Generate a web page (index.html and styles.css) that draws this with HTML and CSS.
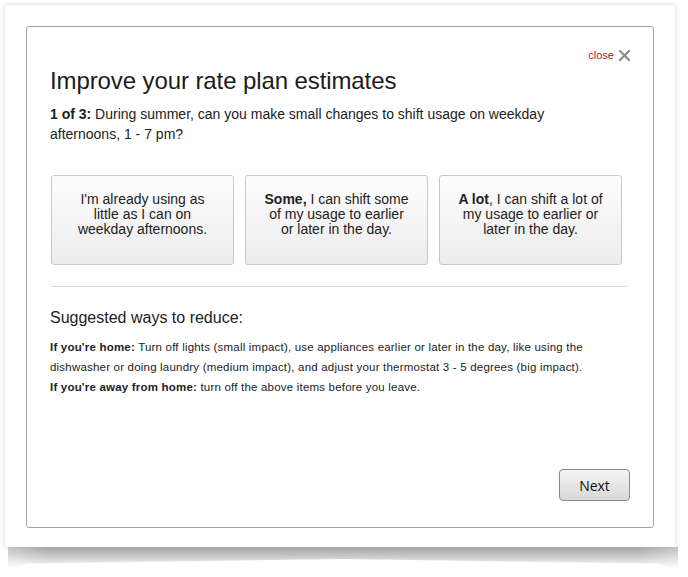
FILE: index.html
```html
<!DOCTYPE html>
<html>
<head>
<meta charset="utf-8">
<link rel="stylesheet" href="styles.css">
</head>
<body>
<div class="paper">
  <div class="dialog">
    <div class="close-row">
      <span class="close-link">close</span>
      <svg class="close-x" width="11" height="11" viewBox="0 0 11 11"><path d="M1 1L10 10M10 1L1 10" stroke="#888" stroke-width="2" stroke-linecap="square"/></svg>
    </div>
    <h1 class="title">Improve your rate plan estimates</h1>
    <p class="question"><b>1 of 3:</b> During summer, can you make small changes to shift usage on weekday afternoons, 1 - 7 pm?</p>
    <div class="choices">
      <div class="choice">I'm already using as little as I can on weekday afternoons.</div>
      <div class="choice"><b>Some,</b> I can shift some of my usage to earlier or later in the day.</div>
      <div class="choice"><b>A lot</b>, I can shift a lot of my usage to earlier or later in the day.</div>
    </div>
    <div class="divider"></div>
    <h2 class="sub">Suggested ways to reduce:</h2>
    <p class="tips"><b>If you're home:</b> Turn off lights (small impact), use appliances earlier or later in the day, like using the dishwasher or doing laundry (medium impact), and adjust your thermostat 3 - 5 degrees (big impact).<br><b>If you're away from home:</b> turn off the above items before you leave.</p>
    <div class="footer">
      <button class="next">Next</button>
    </div>
  </div>
</div>
<div class="curl"></div>
</body>
</html>
```
FILE: styles.css
```css
html, body {
  margin: 0;
  padding: 0;
  background: #fff;
}
body {
  font-family: "Liberation Sans", Arial, sans-serif;
  color: #222;
}
.paper {
  margin: 5px 0 0 5px;
  width: 670px;
  height: 542px;
  padding: 21px 0 0 21px;
  box-sizing: border-box;
  background: #fff;
  box-shadow: 0 0 5px rgba(0,0,0,0.18);
}
.curl {
  margin-left: 8px;
  width: 670px;
  height: 22px;
  background:
    linear-gradient(to right, rgba(255,255,255,0.35), rgba(255,255,255,0) 6%, rgba(255,255,255,0) 94%, rgba(255,255,255,0.35)),
    linear-gradient(to bottom, #a4a4a4, #c2c2c2 35%, #e6e6e6 70%, #ffffff);
  clip-path: polygon(0 0, 100% 0, 100% 100%, 97% 75%, 50% 55%, 3% 75%, 0 100%);
}
.dialog {
  width: 628px;
  height: 502px;
  box-sizing: border-box;
  border: 1px solid #a3a3a3;
  border-radius: 3px;
  padding: 20px 23px 0 23px;
  display: flex;
  flex-direction: column;
}
.close-row {
  display: flex;
  justify-content: flex-end;
  align-items: center;
  gap: 5px;
  height: 14px;
  margin-top: 1px;
}
.close-link {
  color: #b5173f;
  font-size: 11px;
}
.close-x {
  display: block;
}
.title {
  margin: 1px 0 0;
  font-size: 24px;
  font-weight: normal;
  line-height: 36px;
  color: #1c1c1c;
  letter-spacing: -0.1px;
}
.question {
  margin: 5px 0 0;
  font-size: 14px;
  line-height: 20px;
  width: 520px;
}
.choices {
  display: grid;
  grid-template-columns: repeat(3, 183px);
  column-gap: 11px;
  margin: 31px 0 0 1px;
}
.choice {
  height: 90px;
  box-sizing: border-box;
  border: 1px solid #c9c9c9;
  border-radius: 3px;
  background: linear-gradient(to bottom, #fdfdfd, #ececec);
  text-align: center;
  font-size: 14px;
  line-height: 15px;
  padding: 16px 16px 0;
}
.divider {
  margin-top: 20px;
  width: 578px;
  height: 1px;
  border-bottom: 1px solid #d4d4d4;
  border-radius: 0 0 3px 3px;
}
.sub {
  margin: 20px 0 0;
  font-size: 16px;
  font-weight: normal;
  line-height: 22px;
}
.tips {
  margin: 8px 0 0;
  font-size: 11.5px;
  letter-spacing: 0.2px;
  line-height: 20px;
  color: #222;
}
.footer {
  margin-top: auto;
  display: flex;
  justify-content: flex-end;
  padding-bottom: 26px;
}
.next {
  width: 71px;
  height: 32px;
  border: 1px solid #8a8a8a;
  border-radius: 4px;
  background: linear-gradient(to bottom, #f4f4f4, #d8d8d8);
  font-family: "Open Sans", sans-serif;
  font-size: 14px;
  font-weight: normal;
  color: #111;
}
```
